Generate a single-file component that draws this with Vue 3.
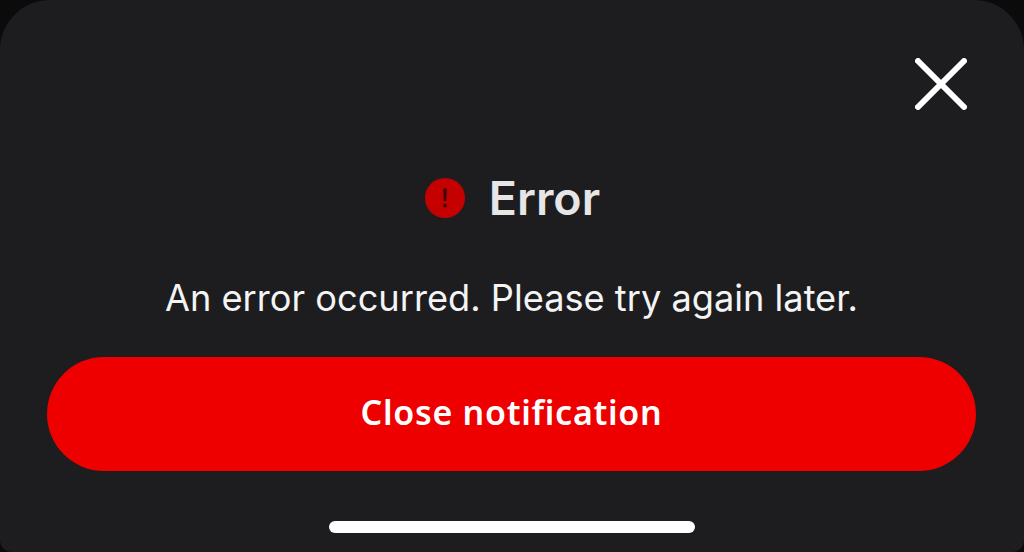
<script setup>
const title = 'Error'
const message = 'An error occurred. Please try again later.'
const action = 'Close notification'
</script>

<template>
  <div class="screen">
    <div class="sheet">
      <button class="close" aria-label="Close">
        <svg width="52" height="52" viewBox="0 0 52 52" fill="none">
          <path d="M3 3L49 49M49 3L3 49" stroke="#fff" stroke-width="6" stroke-linecap="round" />
        </svg>
      </button>

      <div class="title-row">
        <svg class="alert" width="40" height="40" viewBox="0 0 40 40">
          <circle cx="20" cy="20" r="20" fill="#c40000" />
          <path d="M18.2 10.5h3.6l-.6 12.5h-2.4z" fill="#3a0606" />
          <circle cx="20" cy="27.5" r="1.9" fill="#3a0606" />
        </svg>
        <span class="title">{{ title }}</span>
      </div>

      <p class="message">{{ message }}</p>

      <button class="action">{{ action }}</button>

      <div class="home-bar"></div>
    </div>
  </div>
</template>

<style scoped>
.screen {
  width: 1024px;
  height: 552px;
  background: #0b0b0c;
  overflow: hidden;
}

.sheet {
  position: relative;
  box-sizing: border-box;
  height: 552px;
  padding: 172px 48px 0 47px;
  display: flex;
  flex-direction: column;
  align-items: center;
  background: #1d1d1f;
  border-radius: 50px 50px 12px 12px;
}

.close {
  position: absolute;
  top: 58px;
  right: 57px;
  padding: 0;
  border: none;
  background: none;
  display: flex;
}

.title-row {
  display: flex;
  align-items: center;
  gap: 24px;
  height: 52px;
  padding-left: 2px;
}

.title {
  font-family: Inter, sans-serif;
  font-size: 46.5px;
  font-weight: 600;
  color: #e6e6e6;
}

.message {
  margin: 50px 0 0;
  font-family: Inter, sans-serif;
  font-size: 36.2px;
  line-height: 48px;
  color: #f4f4f4;
}

.action {
  margin-top: 35px;
  padding: 0 0 4px;
  width: 100%;
  height: 114px;
  flex-shrink: 0;
  border: none;
  border-radius: 57px;
  background: #ee0000;
  color: #fff;
  font-family: "Noto Sans", sans-serif;
  font-size: 34px;
  font-weight: 600;
  letter-spacing: 0.7px;
}

.home-bar {
  margin-top: 50px;
  width: 366px;
  height: 12px;
  flex-shrink: 0;
  border-radius: 6px;
  background: #fff;
}
</style>

<style>
body {
  background: #0b0b0c;
}
</style>
